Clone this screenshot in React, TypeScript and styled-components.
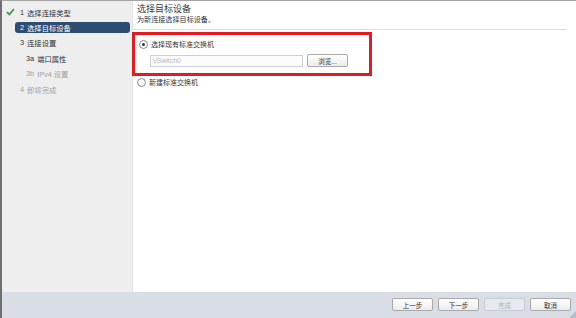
import React from "react";
import styled, { createGlobalStyle } from "styled-components";

const Global = createGlobalStyle`
  html, body { margin: 0; padding: 0; background: #ffffff; }
  body { font-family: "Liberation Sans", "Noto Sans CJK SC", sans-serif; }
  * { box-sizing: border-box; }
`;

const Frame = styled.div`
  width: 576px;
  height: 318px;
  display: flex;
  flex-direction: column;
  border-top: 1px solid #a3a3a3;
  border-left: 2px solid #6e6e6e;
  overflow: hidden;
  position: relative;
`;

const Main = styled.div`
  flex: 1;
  display: flex;
  min-height: 0;
`;

const Sidebar = styled.div`
  width: 131px;
  background: #eeeeee;
  border-right: 1px solid #e2e2e2;
  display: flex;
  flex-direction: column;
  padding: 6px 0 0 2px;
`;

const Step = styled.div<{ $indent?: number; $active?: boolean; $disabled?: boolean; $gap?: number }>`
  display: flex;
  align-items: center;
  height: 11px;
  margin-top: ${(p) => p.$gap ?? 0}px;
  margin-left: 11px;
  margin-right: 2px;
  padding-left: ${(p) => 5 + (p.$indent ?? 0)}px;
  border-radius: 3px;
  font-size: 7.3px;
  white-space: nowrap;
  color: ${(p) => (p.$active ? "#ffffff" : p.$disabled ? "#a3a3a3" : "#333333")};
  background: ${(p) => (p.$active ? "#2c4c72" : "transparent")};
  position: relative;
`;

const Num = styled.span`
  margin-right: 3px;
`;

const Check = styled.svg`
  position: absolute;
  left: -9px;
  top: 1px;
`;

const Content = styled.div`
  flex: 1;
  display: flex;
  flex-direction: column;
  padding: 2px 9px 0 0;
`;

const Header = styled.div`
  padding: 0 0 3px 4px;
  border-bottom: 1px solid #dcdcdc;
  color: #333333;
`;

const Title = styled.div`
  font-size: 9px;
  line-height: 12px;
  color: #3a3a3a;
`;

const Subtitle = styled.div`
  font-size: 7.1px;
  line-height: 11px;
`;

const Highlight = styled.div`
  margin: 2px 0 0 -1px;
  width: 240px;
  border: 3px solid #e21b23;
  padding: 4px 0 6px 4px;
  display: flex;
  flex-direction: column;
  gap: 5px;
`;

const RadioRow = styled.label<{ $pad?: number }>`
  display: flex;
  align-items: center;
  gap: 3px;
  font-size: 7px;
  color: #333333;
  height: 10px;
  padding-left: ${(p) => p.$pad ?? 0}px;
`;

const Radio = styled.span<{ $checked?: boolean }>`
  width: 9px;
  height: 9px;
  border-radius: 50%;
  border: 1px solid #8a8a8a;
  background: #fafafa;
  display: flex;
  align-items: center;
  justify-content: center;
  &::after {
    content: "";
    width: 3px;
    height: 3px;
    border-radius: 50%;
    background: ${(p) => (p.$checked ? "#333333" : "transparent")};
  }
`;

const FieldRow = styled.div`
  display: flex;
  align-items: center;
  gap: 4px;
  padding-left: 11px;
`;

const Input = styled.div`
  width: 153px;
  height: 12px;
  border: 1px solid #cfcfcf;
  background: #fcfcfc;
  font-size: 7px;
  color: #b8b8b8;
  display: flex;
  align-items: center;
  padding-left: 2px;
`;

const Button = styled.div<{ $disabled?: boolean; $w?: number }>`
  width: ${(p) => p.$w ?? 41}px;
  height: 13px;
  border: 1px solid ${(p) => (p.$disabled ? "#c8ccd2" : "#a9a9a9")};
  border-radius: 2px;
  background: ${(p) => (p.$disabled ? "#e6e9ee" : "linear-gradient(#ffffff, #ececec)")};
  color: ${(p) => (p.$disabled ? "#b0b4ba" : "#333333")};
  font-size: 6.5px;
  display: flex;
  align-items: center;
  justify-content: center;
`;

const Second = styled.div`
  margin-top: 1px;
`;

const Footer = styled.div`
  height: 26px;
  background: #d9dee6;
  display: flex;
  align-items: center;
  justify-content: flex-end;
  gap: 5px;
  padding: 0 5px 1px 0;
`;

const Grip = styled.svg`
  position: absolute;
  right: 0;
  bottom: 0;
`;

export default function App() {
  return (
    <>
      <Global />
      <Frame>
        <Main>
          <Sidebar>
            <Step>
              <Check width="9" height="8" viewBox="0 0 9 8">
                <path d="M1 4.2 L3.4 6.5 L8 1" stroke="#3d9a3d" strokeWidth="1.8" fill="none" />
              </Check>
              <Num>1</Num>选择连接类型
            </Step>
            <Step $active $gap={4}>
              <Num>2</Num>选择目标设备
            </Step>
            <Step $gap={4}>
              <Num>3</Num>连接设置
            </Step>
            <Step $indent={6} $gap={5}>
              <Num>3a</Num>端口属性
            </Step>
            <Step $indent={6} $disabled $gap={4}>
              <Num>3b</Num>IPv4 设置
            </Step>
            <Step $disabled $gap={5}>
              <Num>4</Num>即将完成
            </Step>
          </Sidebar>
          <Content>
            <Header>
              <Title>选择目标设备</Title>
              <Subtitle>为新连接选择目标设备。</Subtitle>
            </Header>
            <Highlight>
              <RadioRow>
                <Radio $checked />
                选择现有标准交换机
              </RadioRow>
              <FieldRow>
                <Input>vSwitch0</Input>
                <Button>浏览...</Button>
              </FieldRow>
            </Highlight>
            <Second>
              <RadioRow $pad={4}>
                <Radio />
                新建标准交换机
              </RadioRow>
            </Second>
          </Content>
        </Main>
        <Footer>
          <Button>上一步</Button>
          <Button>下一步</Button>
          <Button $disabled>完成</Button>
          <Button>取消</Button>
        </Footer>
        <Grip width="7" height="7" viewBox="0 0 7 7">
          <path d="M7 0 L7 7 L0 7 Z" fill="#b9bec6" />
        </Grip>
      </Frame>
    </>
  );
}
